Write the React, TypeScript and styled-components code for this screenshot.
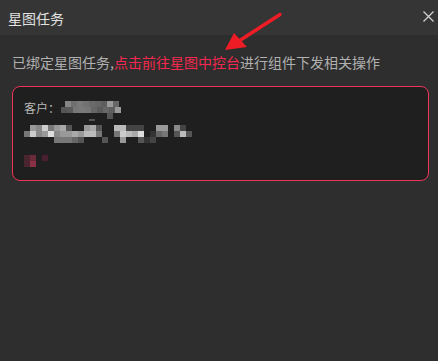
import React from "react";
import styled, { createGlobalStyle } from "styled-components";

const Global = createGlobalStyle`
  html, body { margin: 0; padding: 0; background: #2e2e2e; }
  body { font-family: "Noto Sans CJK SC", "Noto Sans", sans-serif; }
`;

const Dialog = styled.div`
  position: relative;
  width: 438px;
  height: 361px;
  background: #2e2e2e;
  display: flex;
  flex-direction: column;
  overflow: hidden;
`;

const Header = styled.div`
  height: 35px;
  flex: none;
  background: #353535;
  display: flex;
  align-items: center;
  justify-content: space-between;
  padding: 0 2px 0 8px;
  box-sizing: border-box;
`;

const Title = styled.div`
  color: #e2e2e2;
  font-size: 14px;
  line-height: 20px;
`;

const Close = styled.button`
  width: 16px;
  height: 16px;
  padding: 0;
  border: none;
  background: transparent;
  display: flex;
  align-items: center;
  justify-content: center;
  cursor: pointer;
  margin-top: -2px;
`;

const Body = styled.div`
  padding: 17px 9px 0 12px;
  display: flex;
  flex-direction: column;
  gap: 14px;
`;

const Notice = styled.div`
  font-size: 14px;
  line-height: 20px;
  color: #b0b0b0;
  white-space: nowrap;
`;

const Link = styled.a`
  color: #f5284f;
  text-decoration: none;
`;

const Card = styled.div`
  height: 95px;
  box-sizing: border-box;
  border: 1px solid #ee3457;
  border-radius: 8px;
  background: #1f1f1f;
  padding: 10px 11px 13px 11px;
  display: flex;
  flex-direction: column;
`;

const Row = styled.div<{ $top?: number; $h: number }>`
  display: flex;
  align-items: flex-start;
  height: ${(p) => p.$h}px;
  margin-top: ${(p) => p.$top ?? 0}px;
`;

const Label = styled.span`
  font-size: 12px;
  line-height: 20px;
  color: #b8b8b8;
  margin-top: 1px;
  margin-right: 1px;
`;

const Mosaic = styled.svg<{ $top?: number }>`
  display: block;
  margin-top: ${(p) => p.$top ?? 0}px;
  shape-rendering: crispEdges;
`;

const Arrow = styled.svg`
  position: absolute;
  left: 0;
  top: 0;
  pointer-events: none;
`;

type Cell = [number, number, string, number?, number?];

const row1: Cell[] = [
  [4, 0, "#858585"], [10, 0, "#707070"], [16, 0, "#7a7a7a"], [22, 0, "#727272"], [28, 0, "#6a6a6a"],
  [34, 0, "#666666"], [40, 0, "#5e5e5e"], [46, 0, "#999999"], [52, 0, "#666666"],
  [0, 6, "#555555"], [6, 6, "#5a5a5a"], [12, 6, "#777777"], [18, 6, "#7a7a7a"], [24, 6, "#777777"],
  [30, 6, "#666666"], [36, 6, "#5a5a5a"], [42, 6, "#666666"], [48, 6, "#5e5e5e"], [54, 6, "#999999"],
  [46, 12, "#555555"],
  [28, 18, "#555555", 6, 2],
];

const row2: Cell[] = [
  [6, 0, "#999999"], [12, 0, "#888888"], [18, 0, "#cccccc"], [24, 0, "#777777"], [30, 0, "#999999"],
  [36, 0, "#aaaaaa"], [42, 0, "#555555"], [60, 0, "#999999"], [66, 0, "#aaaaaa"], [72, 0, "#555555"],
  [90, 0, "#bbbbbb", 12], [102, 0, "#444444", 18], [132, 0, "#999999", 12], [150, 0, "#888888"], [156, 0, "#444444"],
  [0, 6, "#777777"], [6, 6, "#cccccc"], [12, 6, "#888888"], [18, 6, "#999999"], [24, 6, "#dddddd"],
  [30, 6, "#888888"], [36, 6, "#999999", 12], [48, 6, "#aaaaaa"], [54, 6, "#999999"], [60, 6, "#bbbbbb"],
  [66, 6, "#bbbbbb"], [72, 6, "#777777"], [90, 6, "#777777"], [96, 6, "#cccccc"], [102, 6, "#bbbbbb"],
  [108, 6, "#aaaaaa"], [114, 6, "#dddddd"], [126, 6, "#333333"], [132, 6, "#666666"], [138, 6, "#777777"],
  [150, 6, "#555555"], [156, 6, "#bbbbbb"], [162, 6, "#555555"],
  [30, 12, "#777777", 18], [48, 12, "#666666"], [54, 12, "#555555"], [78, 12, "#555555"],
  [96, 12, "#999999"], [114, 12, "#555555"], [120, 12, "#333333"], [126, 12, "#444444"],
];

const row3: Cell[] = [
  [0, 0, "#4a2530"], [6, 0, "#6a2a3a"], [18, 0, "#4a2030"],
  [0, 6, "#4a2530"], [6, 6, "#8a3045"],
];

const Cells: React.FC<{ cells: Cell[] }> = ({ cells }) => (
  <>
    {cells.map(([x, y, c, w, h], i) => (
      <rect key={i} x={x} y={y} width={w ?? 6} height={h ?? 6} fill={c} />
    ))}
  </>
);

export default function App() {
  return (
    <>
      <Global />
      <Dialog>
        <Header>
          <Title>星图任务</Title>
          <Close aria-label="关闭">
            <svg width="11" height="11" viewBox="0 0 11 11">
              <path d="M0.5 0.5L10.5 10.5M10.5 0.5L0.5 10.5" stroke="#d0d0d0" strokeWidth="1.3" fill="none" />
            </svg>
          </Close>
        </Header>
        <Body>
          <Notice>
            已绑定星图任务,<Link href="#">点击前往星图中控台</Link>进行组件下发相关操作
          </Notice>
          <Card>
            <Row $h={24}>
              <Label>客户：</Label>
              <Mosaic width="60" height="20" $top={4}>
                <Cells cells={row1} />
              </Mosaic>
            </Row>
            <Row $h={18} $top={4}>
              <Mosaic width="168" height="18">
                <Cells cells={row2} />
              </Mosaic>
            </Row>
            <Row $h={12} $top={12}>
              <Mosaic width="24" height="12">
                <Cells cells={row3} />
              </Mosaic>
            </Row>
          </Card>
        </Body>
        <Arrow width="438" height="361" viewBox="0 0 438 361">
          <path d="M280 14.5 L239 41" stroke="#ee1d25" strokeWidth="3.4" strokeLinecap="round" fill="none" />
          <polygon points="225,50 234,33 240,39.5 247,47" fill="#ee1d25" />
        </Arrow>
      </Dialog>
    </>
  );
}
